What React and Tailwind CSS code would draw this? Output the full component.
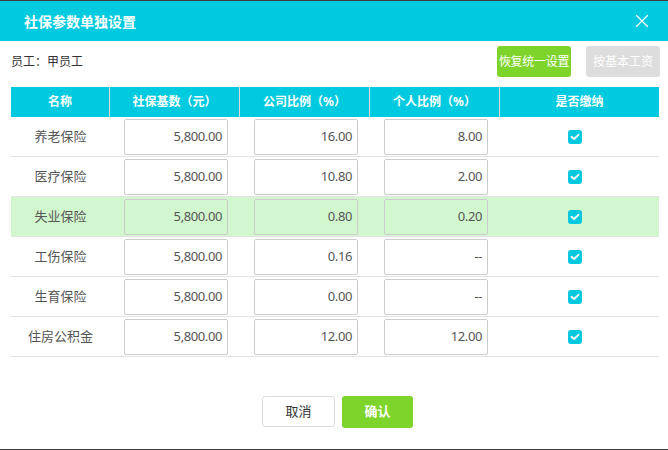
import { X } from "lucide-react";

const rows = [
    { name: "养老保险", base: "5,800.00", company: "16.00", personal: "8.00" },
    { name: "医疗保险", base: "5,800.00", company: "10.80", personal: "2.00" },
    { name: "失业保险", base: "5,800.00", company: "0.80", personal: "0.20", active: true },
    { name: "工伤保险", base: "5,800.00", company: "0.16", personal: "--" },
    { name: "生育保险", base: "5,800.00", company: "0.00", personal: "--" },
    { name: "住房公积金", base: "5,800.00", company: "12.00", personal: "12.00" },
];

const cols = "grid grid-cols-[99px_130px_130px_130px_159px]";

function Cell({ value, active }) {
    return (
        <div className="flex items-center pl-[14px]">
            <div
                className={
                    "w-[104px] h-[36px] border border-[#cccccc] rounded-[2px] flex items-center justify-end pr-[5px] text-[13px] tracking-[-0.4px] text-[#555]" +
                    (active ? " bg-[#d2f7cf]" : " bg-white")
                }
            >
                {value}
            </div>
        </div>
    );
}

function Check() {
    return (
        <div className="w-[14px] h-[14px] rounded-[3px] bg-[#00c9df] flex items-center justify-center">
            <svg width="10" height="8" viewBox="0 0 10 8" fill="none">
                <path d="M1.5 3.8 L4 6 L8.5 1.8" stroke="white" strokeWidth="1.8" strokeLinecap="round" strokeLinejoin="round" />
            </svg>
        </div>
    );
}

export default function App() {
    return (
        <div
            className="w-[668px] h-[450px] bg-[#3c3c3c] py-px flex flex-col"
            style={{ fontFamily: '"Noto Sans", "Noto Sans CJK SC", sans-serif' }}
        >
            <div className="flex-1 bg-white flex flex-col">
                {/* Header */}
                <div className="h-10 bg-[#00cadf] flex items-center justify-between pl-6 pr-[15px]">
                    <h2 className="text-[14px] font-bold text-white">社保参数单独设置</h2>
                    <X className="w-[22px] h-[22px] text-white" strokeWidth={1.3} />
                </div>

                {/* Toolbar */}
                <div className="flex items-center justify-between pl-[11px] pr-2 mt-[5px] h-[31px]">
                    <span className="text-[12px] text-[#333]">员工：甲员工</span>
                    <div className="flex items-center gap-[15px]">
                        <button className="w-[74px] h-[31px] rounded-[3px] bg-[#7ed42a] text-white text-[12px] tracking-[-0.3px]">
                            恢复统一设置
                        </button>
                        <button className="w-[74px] h-[31px] rounded-[3px] bg-[#dddddd] text-white text-[12px]">
                            按基本工资
                        </button>
                    </div>
                </div>

                {/* Table */}
                <div className="mt-[10px] mx-[11px] w-[648px]">
                    <div className={cols + " h-[30px] bg-[#00cadf] text-white text-[12px] font-bold"}>
                        <div className="flex items-center justify-center border-r border-[#e2d6d6]">名称</div>
                        <div className="flex items-center justify-center border-r border-[#e2d6d6]">社保基数（元）</div>
                        <div className="flex items-center justify-center border-r border-[#e2d6d6]">公司比例（%）</div>
                        <div className="flex items-center justify-center border-r border-[#e2d6d6]">个人比例（%）</div>
                        <div className="flex items-center justify-center">是否缴纳</div>
                    </div>
                    {rows.map((r) => (
                        <div
                            key={r.name}
                            className={
                                cols +
                                " h-[40px] border-b border-[#e3e3e3]" +
                                (r.active ? " bg-[#d2f7cf]" : "")
                            }
                        >
                            <div className="flex items-center justify-center text-[13px] text-[#555]">{r.name}</div>
                            <Cell value={r.base} active={r.active} />
                            <Cell value={r.company} active={r.active} />
                            <Cell value={r.personal} active={r.active} />
                            <div className="flex items-center justify-center pr-[9px]">
                                <Check />
                            </div>
                        </div>
                    ))}
                </div>

                {/* Footer */}
                <div className="flex justify-center gap-[7px] mt-[39px] pl-[7px]">
                    <button className="w-[73px] h-[31px] rounded-[3px] border border-[#dcdcdc] bg-white text-[13px] text-[#333]">
                        取消
                    </button>
                    <button className="w-[71px] h-[32px] rounded-[3px] bg-[#7ed42a] text-white text-[13px] font-bold">
                        确认
                    </button>
                </div>
            </div>
        </div>
    );
}
